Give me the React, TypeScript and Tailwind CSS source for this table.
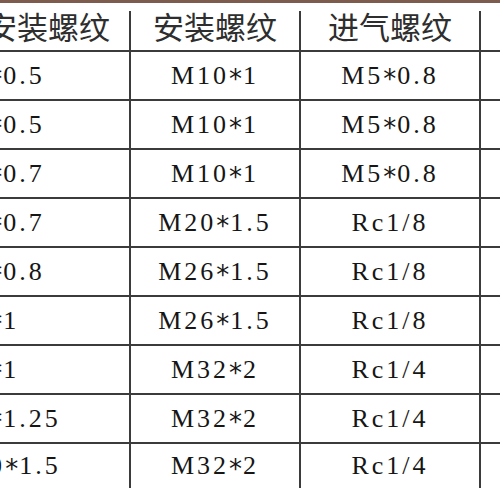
const rows: [string, string, string][] = [
  ['M5*0.5', 'M10*1', 'M5*0.8'],
  ['M6*0.5', 'M10*1', 'M5*0.8'],
  ['M6*0.7', 'M10*1', 'M5*0.8'],
  ['M8*0.7', 'M20*1.5', 'Rc1/8'],
  ['M8*0.8', 'M26*1.5', 'Rc1/8'],
  ['M8*1', 'M26*1.5', 'Rc1/8'],
  ['M8*1', 'M32*2', 'Rc1/4'],
  ['M8*1.25', 'M32*2', 'Rc1/4'],
  ['M10*1.5', 'M32*2', 'Rc1/4'],
];

const serif = "font-['Liberation_Serif','DejaVu_Serif',serif]";
const cjk = "font-['Noto_Sans_CJK_SC','Noto_Sans',sans-serif]";

// asterisk in the source font sits mid-height and is larger
function Spec({ text }: { text: string }) {
  const [a, b] = text.split('*');
  if (b === undefined) return <>{text}</>;
  return (
    <>
      {a}
      <span className="inline-block font-['DejaVu_Sans',sans-serif] text-[26px] tracking-[1px] translate-y-[3px]">*</span>
      {b}
    </>
  );
}

export default function App() {
  return (
    <div className="w-[500px] h-[500px] bg-white overflow-hidden">
      <div className="h-[3px] bg-[#7d5c4e]" />
      <div className="ml-[-58px] w-[620px] mt-[8px]">
        {/* header */}
        <div className={`flex h-[39px] text-[31px] leading-none text-[#2e2e2e] ${cjk}`}>
          <div className="w-[189px] pl-[25px] border-r-2 border-[#3b3b3b] flex items-center justify-center pb-[10px]">
            安装螺纹
          </div>
          <div className="w-[170px] border-r-2 border-[#3b3b3b] flex items-center justify-center pb-[10px]">
            安装螺纹
          </div>
          <div className="w-[180px] border-r-2 border-[#3b3b3b] flex items-center justify-center pb-[10px]">
            进气螺纹
          </div>
          <div className="flex-1" />
        </div>
        <div className="h-[2px] bg-[#3b3b3b]" />
        {rows.map((r, i) => (
          <div key={i}>
            <div
              className={`flex ${i === rows.length - 1 ? 'h-[44px]' : 'h-[47px]'} text-[26px] tracking-[3px] leading-none text-[#161616] ${serif}`}
            >
              <div className="w-[189px] pl-[5px] border-r-2 border-[#3b3b3b] flex items-center">
                <Spec text={r[0]} />
              </div>
              <div className="w-[170px] border-r-2 border-[#3b3b3b] flex items-center justify-center">
                <Spec text={r[1]} />
              </div>
              <div className="w-[180px] border-r-2 border-[#3b3b3b] flex items-center justify-center">
                <Spec text={r[2]} />
              </div>
              <div className="flex-1" />
            </div>
            {i < rows.length - 1 && <div className="h-[2px] bg-[#3b3b3b]" />}
          </div>
        ))}
      </div>
    </div>
  );
}
